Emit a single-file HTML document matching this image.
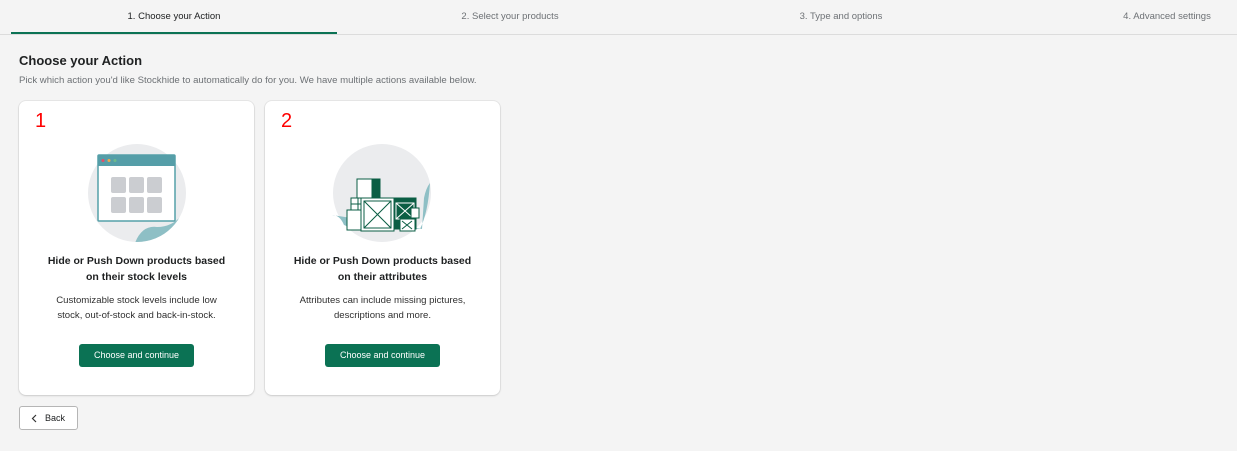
<!DOCTYPE html>
<html><head><style>
body{margin:0;width:1237px;height:451px;background:#f4f4f4;font-family:"Liberation Sans",sans-serif;position:relative;overflow:hidden;color:#202223}
.tab{position:absolute;top:11px;font-size:9.5px;color:#6d7175;transform:translateX(-50%);white-space:nowrap}
.card{position:absolute;top:101px;width:235px;height:294px;background:#fff;border-radius:7px;box-shadow:0 0 0 1px rgba(0,0,0,.05),0 1px 2px rgba(0,0,0,.12)}
.num{position:absolute;left:16px;top:9px;color:#f00;font-size:20px}
.t{position:absolute;top:152px;left:0;right:0;text-align:center;font-size:10.5px;font-weight:bold;line-height:16px}
.d{position:absolute;top:192px;left:0;right:0;text-align:center;font-size:9.6px;line-height:15px;color:#303030}
.btn{position:absolute;top:243px;left:60px;width:115px;height:23px;background:#0b7254;color:#fff;border-radius:3px;font-size:9px;text-align:center;line-height:23px}
</style></head><body>
<div class="tab" style="left:174px;color:#202223">1. Choose your Action</div>
<div class="tab" style="left:510px">2. Select your products</div>
<div class="tab" style="left:841px">3. Type and options</div>
<div class="tab" style="left:1167px">4. Advanced settings</div>
<div style="position:absolute;left:0;right:0;top:34px;height:1px;background:#dcdcdc"></div>
<div style="position:absolute;left:11px;width:326px;top:32px;height:2px;background:#0b7254"></div>
<div style="position:absolute;left:19px;top:53px;font-size:13px;font-weight:bold">Choose your Action</div>
<div style="position:absolute;left:19px;top:75px;font-size:9.6px;color:#6d7175">Pick which action you'd like Stockhide to automatically do for you. We have multiple actions available below.</div>

<div class="card" style="left:19px">
<div class="num">1</div>
<svg style="position:absolute;left:68px;top:42px" width="100" height="100" viewBox="0 0 100 100">
<defs><clipPath id="c1"><circle cx="50" cy="50" r="49"/></clipPath></defs>
<circle cx="50" cy="50" r="49" fill="#ebecee"/>
<path clip-path="url(#c1)" d="M48 100 Q55 82 70 84 Q85 84 95 72 L100 100Z" fill="#8ebfc5"/>
<rect x="11" y="12" width="77" height="66" fill="#fff" stroke="#55a0a8" stroke-width="1.5" rx="1"/>
<rect x="11" y="12" width="77" height="11" fill="#559ea8"/>
<circle cx="16" cy="17.5" r="1.5" fill="#e64c6a"/><circle cx="22" cy="17.5" r="1.5" fill="#f0a84a"/><circle cx="28" cy="17.5" r="1.5" fill="#6dbb8a"/>
<g fill="#cbcdd1"><rect x="24" y="34" width="15" height="16" rx="2"/><rect x="42" y="34" width="15" height="16" rx="2"/><rect x="60" y="34" width="15" height="16" rx="2"/><rect x="24" y="54" width="15" height="16" rx="2"/><rect x="42" y="54" width="15" height="16" rx="2"/><rect x="60" y="54" width="15" height="16" rx="2"/></g>
</svg>
<div class="t">Hide or Push Down products based<br>on their stock levels</div>
<div class="d">Customizable stock levels include low<br>stock, out-of-stock and back-in-stock.</div>
<div class="btn">Choose and continue</div>
</div>

<div class="card" style="left:265px">
<div class="num">2</div>
<svg style="position:absolute;left:67px;top:42px" width="100" height="100" viewBox="0 0 100 100">
<circle cx="50" cy="50" r="49" fill="#ebecee"/>
<path d="M0 72 Q8 72 12 82 Q25 88 40 86 L88 86 Q96 70 98 40 Q94 45 92 55 L90 86Z" fill="#8ebfc5"/>
<g stroke="#0b5e44" stroke-width="1" fill="#fff">
<rect x="25" y="36" width="23" height="22"/><rect x="40" y="36" width="8" height="22" fill="#0b5e44"/>
<rect x="19" y="55" width="14" height="12"/><path d="M19 61H33M26 55V67"/>
<rect x="15" y="67" width="17" height="20"/>
<rect x="29" y="55" width="33" height="33"/><rect x="32" y="58" width="27" height="27"/><path d="M32 58L59 85M59 58L32 85"/>
<rect x="62" y="55" width="22" height="31" fill="#0b5e44"/><rect x="64" y="60" width="18" height="16" fill="none" stroke="#fff"/><path d="M64 60L82 76M82 60L64 76" stroke="#fff"/>
<rect x="79" y="65" width="8" height="10"/>
<rect x="68" y="76" width="15" height="12"/><path d="M70 78l10 8M80 78l-10 8"/>
</g>
</svg>
<div class="t">Hide or Push Down products based<br>on their attributes</div>
<div class="d">Attributes can include missing pictures,<br>descriptions and more.</div>
<div class="btn">Choose and continue</div>
</div>

<div style="position:absolute;left:19px;top:406px;width:57px;height:22px;border:1px solid #b5b5b5;border-radius:3px;background:#fff;font-size:9px;line-height:22px">
<svg style="position:absolute;left:11px;top:7px" width="6" height="9" viewBox="0 0 6 9"><path d="M5 1L1.5 4.5L5 8" stroke="#333" stroke-width="1.2" fill="none"/></svg>
<span style="position:absolute;left:25px">Back</span></div>
</body></html>
